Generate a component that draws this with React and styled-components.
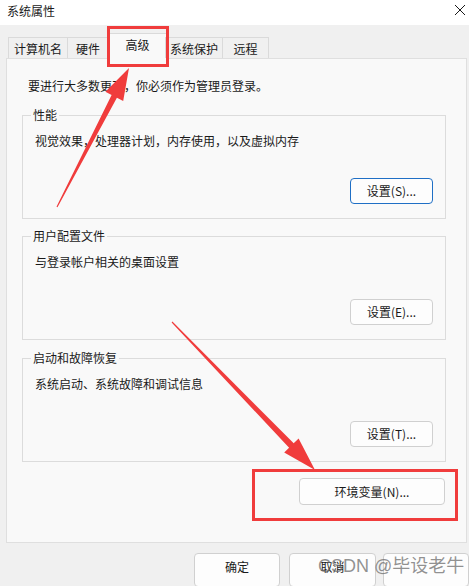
import React from 'react';
import styled, { createGlobalStyle, css } from 'styled-components';

const GlobalStyle = createGlobalStyle`
  html, body {
    margin: 0;
    padding: 0;
    background: #f0f0f0;
  }
  * {
    box-sizing: border-box;
  }
`

const Window = styled.div`
  position: relative;
  width: 469px;
  height: 586px;
  overflow: hidden;
  background: #f0f0f0;
  font-family: "Noto Sans CJK SC", "Microsoft YaHei UI", sans-serif;
  font-size: 12px;
  color: #1a1a1a;
`

const TitleBar = styled.div`
  height: 25px;
  background: #ffffff;
  display: flex;
  align-items: center;
  justify-content: space-between;
  padding: 0 3px 0 7px;
`

const Title = styled.span`
  font-size: 12px;
  line-height: 16px;
  margin-top: -3px;
`

const CloseIcon = styled.svg`
  width: 12px;
  height: 12px;
  margin-top: -6px;
`

const TabStrip = styled.div`
  display: flex;
  align-items: flex-end;
  height: 33px;
  padding-left: 8px;
  position: relative;
  z-index: 1;
`

const Tab = styled.div`
  width: ${p => p.$w}px;
  height: 21px;
  margin-left: -1px;
  border: 1px solid #dadada;
  border-bottom: none;
  background: #f0f0f0;
  display: flex;
  align-items: center;
  justify-content: center;
  line-height: 16px;
  padding-top: 1px;

  &:first-child {
    margin-left: 0;
  }

  ${p => p.$active && css`
    height: 26px;
    margin: 0 -2px -1px -2px;
    background: #f9f9f9;
    padding-top: 0;
    padding-bottom: 3px;
  `}
`

const Panel = styled.div`
  margin-left: 6px;
  width: 461px;
  height: 485px;
  border: 1px solid #dfdfdf;
  background: #f9f9f9;
  padding: 19px 0 0 15px;
  display: flex;
  flex-direction: column;
`

const Intro = styled.p`
  margin: 0 0 0 6px;
  line-height: 16px;
`

const Group = styled.div`
  width: 424px;
  height: 104px;
  margin-top: ${p => p.$top}px;
  border: 1px solid #dcdcdc;
  display: flex;
  flex-direction: column;
  align-items: flex-start;
  padding: 0 12px 14px 11px;
`

const Legend = styled.span`
  margin: -9px 0 0 -3px;
  padding: 0 2px;
  background: #f9f9f9;
  line-height: 16px;
`

const Description = styled.p`
  margin: 10px 0 0 1px;
  line-height: 16px;
`

const Button = styled.button`
  width: ${p => p.$w || 83}px;
  height: ${p => p.$h || 26}px;
  border: 1px solid ${p => (p.$focus ? '#1f6fc5' : '#d0d0d0')};
  border-radius: 4px;
  background: #fdfdfd;
  font-family: inherit;
  font-size: 12px;
  color: #1a1a1a;
  padding: 0;
  line-height: 16px;
  display: flex;
  align-items: ${p => (p.$h ? 'flex-start' : 'center')};
  padding-top: ${p => (p.$h ? '5px' : '0')};
  justify-content: center;
  flex-shrink: 0;
`

const GroupButton = styled(Button)`
  margin-top: auto;
  align-self: flex-end;
`

const EnvRow = styled.div`
  width: 424px;
  display: flex;
  justify-content: flex-end;
  margin-top: 16px;
  padding-right: 1px;
`

const Footer = styled.div`
  display: flex;
  margin-top: 10px;
  padding-left: 194px;
`

const FooterButton = styled(Button)`
  margin-left: ${p => p.$gap || 0}px;
`

const Overlay = styled.svg`
  position: absolute;
  left: 0;
  top: 0;
  width: 469px;
  height: 586px;
  pointer-events: none;
  z-index: 5;
`

const Watermark = styled.div`
  position: absolute;
  left: 318px;
  top: 555px;
  font-size: 18px;
  line-height: 22px;
  color: rgba(110, 110, 110, 0.75);
  z-index: 6;
  white-space: nowrap;
  font-family: "Liberation Sans", "Noto Sans CJK SC", sans-serif;
`

const groups = [
  { title: '性能', text: '视觉效果，处理器计划，内存使用，以及虚拟内存', button: '设置(S)...', focus: true, top: 21 },
  { title: '用户配置文件', text: '与登录帐户相关的桌面设置', button: '设置(E)...', top: 17 },
  { title: '启动和故障恢复', text: '系统启动、系统故障和调试信息', button: '设置(T)...', top: 18 },
]

const tabs = [
  { label: '计算机名', w: 60 },
  { label: '硬件', w: 42 },
  { label: '高级', w: 61, active: true },
  { label: '系统保护', w: 58 },
  { label: '远程', w: 47 },
]

// builds an annotation arrow: tapered shaft plus a triangular head
const arrowPoints = (tail, tip, headLen, headHalf, shaftHalf, tailHalf) => {
  const dx = tip[0] - tail[0]
  const dy = tip[1] - tail[1]
  const len = Math.hypot(dx, dy)
  const ux = dx / len
  const uy = dy / len
  const px = -uy
  const py = ux
  const bx = tip[0] - ux * headLen
  const by = tip[1] - uy * headLen
  const pts = [
    [tail[0] + px * tailHalf, tail[1] + py * tailHalf],
    [bx + px * shaftHalf, by + py * shaftHalf],
    [bx + px * headHalf, by + py * headHalf],
    tip,
    [bx - px * headHalf, by - py * headHalf],
    [bx - px * shaftHalf, by - py * shaftHalf],
    [tail[0] - px * tailHalf, tail[1] - py * tailHalf],
  ]
  return pts.map(p => p.map(v => v.toFixed(1)).join(',')).join(' ')
}

const App = () => {
  return (
    <Window>
      <GlobalStyle />
      <TitleBar>
        <Title>系统属性</Title>
        <CloseIcon viewBox="0 0 12 12">
          <path d="M1 1 L11 11 M11 1 L1 11" stroke="#1a1a1a" strokeWidth="1" fill="none" />
        </CloseIcon>
      </TitleBar>

      <TabStrip>
        {tabs.map(t => (
          <Tab key={t.label} $w={t.w} $active={t.active}>{t.label}</Tab>
        ))}
      </TabStrip>

      <Panel>
        <Intro>要进行大多数更改，你必须作为管理员登录。</Intro>
        {groups.map(g => (
          <Group key={g.title} $top={g.top}>
            <Legend>{g.title}</Legend>
            <Description>{g.text}</Description>
            <GroupButton $focus={g.focus}>{g.button}</GroupButton>
          </Group>
        ))}
        <EnvRow>
          <Button $w={146} $h={27}>环境变量(N)...</Button>
        </EnvRow>
      </Panel>

      <Footer>
        <FooterButton $w={86} $h={34}>确定</FooterButton>
        <FooterButton $w={87} $h={34} $gap={9}>取消</FooterButton>
        <FooterButton $w={86} $h={34} $gap={7} disabled aria-label="应用" />
      </Footer>

      <Overlay viewBox="0 0 469 586">
        <rect x="108.5" y="27.5" width="59" height="38" fill="none" stroke="#f03c3c" strokeWidth="3" />
        <rect x="253.5" y="470.5" width="203" height="49" fill="none" stroke="#f03c3c" strokeWidth="3" />
        <polygon points={arrowPoints([57, 207], [129, 68], 32, 10, 3, 0.6)} fill="#f03c3c" />
        <polygon points={arrowPoints([172, 322], [315, 470], 34, 10, 3.2, 0.6)} fill="#f03c3c" />
      </Overlay>

      <Watermark>CSDN @毕设老牛</Watermark>
    </Window>
  )
}

export default App
